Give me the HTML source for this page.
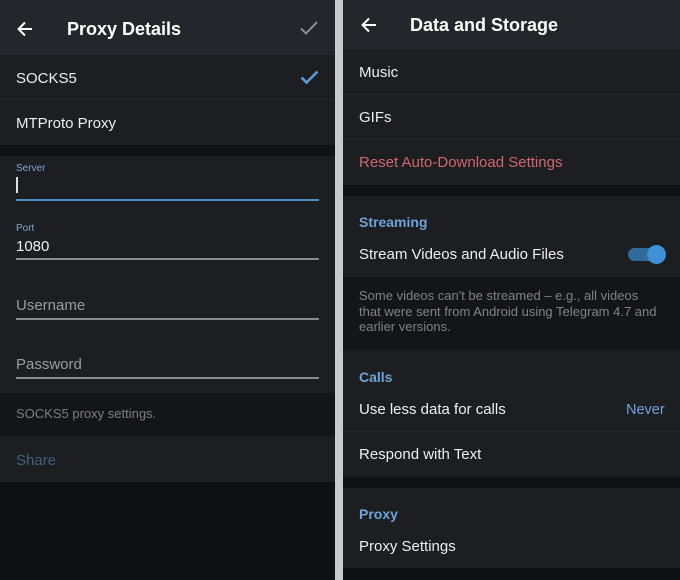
<!DOCTYPE html>
<html><head><meta charset="utf-8"><style>
*{margin:0;padding:0;box-sizing:border-box}
body{width:680px;height:580px;background:#c9c9c9;font-family:"Liberation Sans",Roboto,sans-serif;position:relative;overflow:hidden}
.p{position:absolute;top:0;height:580px;background:#0f1012;overflow:hidden}
.a{position:absolute;left:0;right:0}
.t{position:absolute;white-space:nowrap}
.hd{background:#23262a}
.c{background:#1c1e22}
.sep{border-bottom:1px solid #25282c}
.w{color:#eceef0;font-size:15px}
.b{color:#6ea4d9;font-size:14px;font-weight:bold}
.line{position:absolute;left:16px;width:303px;height:2px;background:#8a8c8f}
</style></head><body>
<div class="p" style="left:0;width:335px">
 <div class="a hd" style="top:0;height:55px"></div>
 <svg class="t" style="left:16px;top:20px" width="18" height="18" viewBox="0 0 18 18"><path d="M16 9H3M9 2.5L2.5 9 9 15.5" stroke="#fff" stroke-width="2" fill="none"/></svg>
 <div class="t" style="left:67px;top:19px;color:#fff;font-size:18px;font-weight:bold">Proxy Details</div>
 <svg class="t" style="left:299px;top:20px" width="20" height="16" viewBox="0 0 20 16"><path d="M2 8.5l5 5L18 2" stroke="#8c8e91" stroke-width="2" fill="none"/></svg>
 <div class="a c sep" style="top:55px;height:45px"></div>
 <div class="t w" style="left:16px;top:70px">SOCKS5</div>
 <svg class="t" style="left:300px;top:70px" width="19" height="15" viewBox="0 0 19 15"><path d="M1.5 7.5l5 5L17.5 1.5" stroke="#5a9bd8" stroke-width="2.6" fill="none"/></svg>
 <div class="a c" style="top:100px;height:45px"></div>
 <div class="t w" style="left:16px;top:115px">MTProto Proxy</div>
 <div class="a" style="top:145px;height:11px;background:#111214"></div>
 <div class="a c" style="top:156px;height:237px"></div>
 <div class="t" style="left:16px;top:163px;color:#7ea6cf;font-size:10px">Server</div>
 <div class="t" style="left:16px;top:177px;width:2px;height:16px;background:#ddd"></div>
 <div class="line" style="top:199px;background:#4f8fc8"></div>
 <div class="t" style="left:16px;top:223px;color:#7ea6cf;font-size:10px">Port</div>
 <div class="t w" style="left:16px;top:238px">1080</div>
 <div class="line" style="top:258px"></div>
 <div class="t" style="left:16px;top:297px;color:#9a9c9f;font-size:15px">Username</div>
 <div class="line" style="top:318px"></div>
 <div class="t" style="left:16px;top:356px;color:#9a9c9f;font-size:15px">Password</div>
 <div class="line" style="top:377px"></div>
 <div class="a" style="top:393px;height:43px;background:#141517"></div>
 <div class="t" style="left:16px;top:406px;color:#7c7e81;font-size:13px">SOCKS5 proxy settings.</div>
 <div class="a c" style="top:436px;height:46px"></div>
 <div class="t" style="left:16px;top:452px;color:#3f5f80;font-size:15px">Share</div>
</div>
<div class="p" style="left:343px;width:337px">
 <div class="a hd" style="top:0;height:50px"></div>
 <svg class="t" style="left:17px;top:16px" width="18" height="18" viewBox="0 0 18 18"><path d="M16 9H3M9 2.5L2.5 9 9 15.5" stroke="#fff" stroke-width="2" fill="none"/></svg>
 <div class="t" style="left:67px;top:15px;color:#fff;font-size:18px;font-weight:bold">Data and Storage</div>
 <div class="a c sep" style="top:50px;height:45px"></div>
 <div class="t w" style="left:16px;top:64px">Music</div>
 <div class="a c sep" style="top:95px;height:45px"></div>
 <div class="t w" style="left:16px;top:109px">GIFs</div>
 <div class="a c" style="top:140px;height:45px"></div>
 <div class="t" style="left:16px;top:154px;color:#d0676b;font-size:15px">Reset Auto-Download Settings</div>
 <div class="a" style="top:185px;height:11px;background:#111214"></div>
 <div class="a c" style="top:196px;height:81px"></div>
 <div class="t b" style="left:16px;top:214px">Streaming</div>
 <div class="t w" style="left:16px;top:246px">Stream Videos and Audio Files</div>
 <div class="t" style="left:285px;top:248px;width:32px;height:13px;border-radius:7px;background:#2f6a9a"></div>
 <div class="t" style="left:304px;top:245px;width:19px;height:19px;border-radius:50%;background:#3f90d4"></div>
 <div class="a" style="top:277px;height:73px;background:#141517"></div>
 <div class="t" style="left:16px;top:288px;color:#808285;font-size:13px;line-height:15.5px;white-space:normal;width:302px">Some videos can't be streamed – e.g., all videos<br>that were sent from Android using Telegram 4.7 and earlier versions.</div>
 <div class="a c sep" style="top:350px;height:82px"></div>
 <div class="t b" style="left:16px;top:369px">Calls</div>
 <div class="t w" style="left:16px;top:401px">Use less data for calls</div>
 <div class="t" style="left:283px;top:402px;color:#6ea4d9;font-size:14.5px">Never</div>
 <div class="a c" style="top:432px;height:45px"></div>
 <div class="t w" style="left:16px;top:446px">Respond with Text</div>
 <div class="a" style="top:477px;height:11px;background:#111214"></div>
 <div class="a c" style="top:488px;height:80px"></div>
 <div class="t b" style="left:16px;top:506px">Proxy</div>
 <div class="t w" style="left:16px;top:538px">Proxy Settings</div>
</div>
</body></html>
